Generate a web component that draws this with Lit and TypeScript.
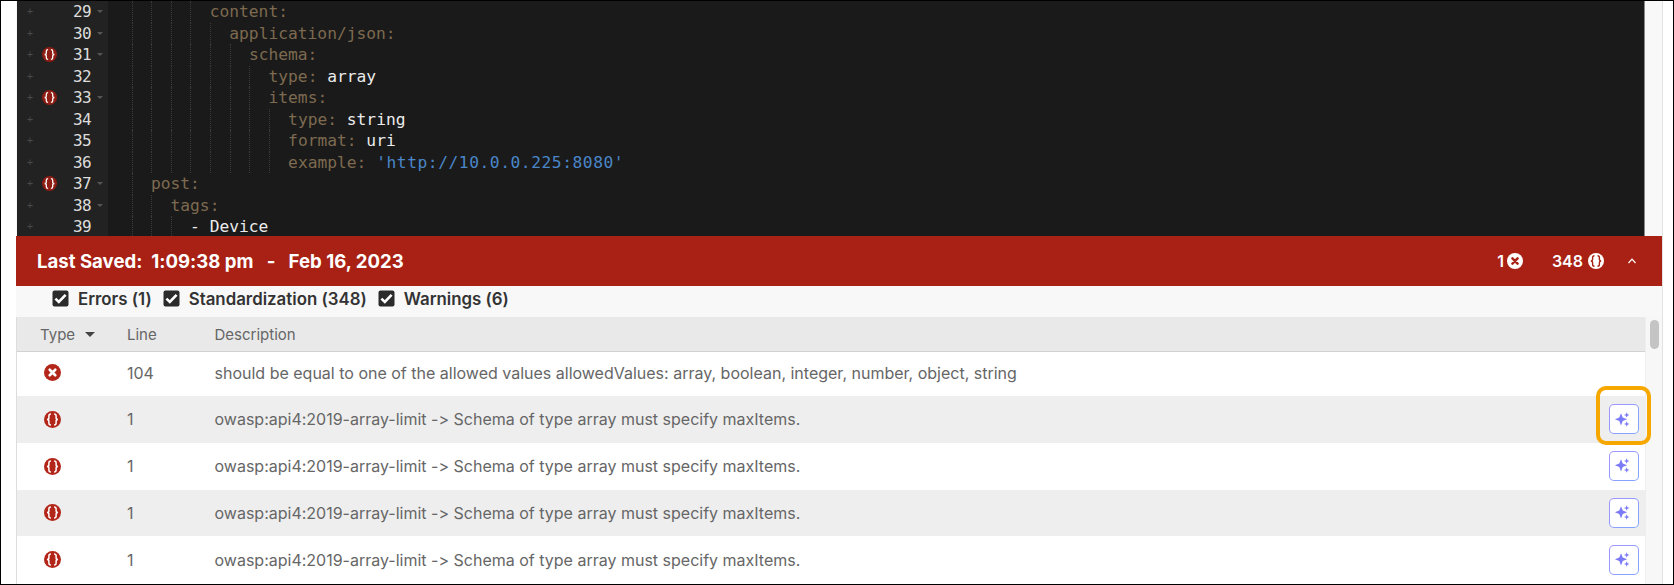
import { LitElement, html, css, svg } from "lit";
import { customElement } from "lit/decorators.js";

const CODE: [string, string, string, string, boolean, boolean][] = [
  ["29", "content:", "", "", false, true],
  ["30", "application/json:", "", "", false, true],
  ["31", "schema:", "", "", true, true],
  ["32", "type:", " array", "", false, false],
  ["33", "items:", "", "", true, true],
  ["34", "type:", " string", "", false, false],
  ["35", "format:", " uri", "", false, false],
  ["36", "example:", " ", "'http://10.0.0.225:8080'", false, false],
  ["37", "post:", "", "", true, true],
  ["38", "tags:", "", "", false, true],
  ["39", "", "- Device", "", false, false],
];
const INDENT = [5, 6, 7, 8, 8, 9, 9, 9, 2, 3, 4];
const GUIDES = [
  [1, 2, 3, 4], [1, 2, 3, 4, 5], [1, 2, 3, 4, 5, 6], [1, 2, 3, 4, 5, 6, 7], [1, 2, 3, 4, 5, 6, 7],
  [1, 2, 3, 4, 5, 6, 7, 8], [1, 2, 3, 4, 5, 6, 7, 8], [1, 2, 3, 4, 5, 6, 7, 8], [1], [1, 2], [1, 2, 3],
];

const errorIcon = (c: string, f: string, s: number) => html`<svg width=${s} height=${s} viewBox="0 0 16 16">
  <circle cx="8" cy="8" r="8" fill=${c}></circle>
  <path d="M5.4 5.4l5.2 5.2M10.6 5.4l-5.2 5.2" stroke=${f} stroke-width="2.5" stroke-linecap="round"></path>
</svg>`;
const braceIcon = (c: string, f: string, s: number) => html`<svg width=${s} height=${s} viewBox="0 0 16 16">
  <circle cx="8" cy="8" r="8" fill=${c}></circle>
  <path d="M6.5 2.8C5 2.8 4.6 3.5 4.6 4.6v2C4.6 7.5 4 8 2.8 8c1.2 0 1.8.5 1.8 1.4v2c0 1.1.4 1.8 1.9 1.8M9.5 2.8c1.5 0 1.9.7 1.9 1.8v2c0 .9.6 1.4 1.8 1.4-1.2 0-1.8.5-1.8 1.4v2c0 1.1-.4 1.8-1.9 1.8" fill="none" stroke=${f} stroke-width="1.4"></path>
</svg>`;
const sparkle = svg`<path d="M13 9.2l1.7 4.4 4.4 1.7-4.4 1.7-1.7 4.4-1.7-4.4-4.4-1.7 4.4-1.7z" fill="#7b7bf7"></path>
  <path d="M18.7 8.2l.8 2 2 .8-2 .8-.8 2-.8-2-2-.8 2-.8zM18.7 17.2l.8 2 2 .8-2 .8-.8 2-.8-2-2-.8 2-.8z" fill="#7b7bf7"></path>`;
const check = html`<svg width="17" height="17" viewBox="0 0 17 17">
  <rect x="0.5" y="0.5" width="16" height="16" rx="2" fill="#2b2b2b"></rect>
  <path d="M3.4 8.6l3.4 3.4 6.8-7.2" fill="none" stroke="#fff" stroke-width="2.6"></path>
</svg>`;

const ROWS: [string, string, string][] = [
  ["e", "104", "should be equal to one of the allowed values allowedValues: array, boolean, integer, number, object, string"],
  ["b", "1", "owasp:api4:2019-array-limit -> Schema of type array must specify maxItems."],
  ["b", "1", "owasp:api4:2019-array-limit -> Schema of type array must specify maxItems."],
  ["b", "1", "owasp:api4:2019-array-limit -> Schema of type array must specify maxItems."],
  ["b", "1", "owasp:api4:2019-array-limit -> Schema of type array must specify maxItems."],
];

@customElement("app-root")
export class AppRoot extends LitElement {
  static styles = css`
    :host { display: block; width: 1674px; height: 585px; overflow: hidden; box-sizing: border-box; background: #fff;
      border: 1px solid #000; font-family: Inter, "Liberation Sans", sans-serif; font-variant-ligatures: none; font-feature-settings: "calt" 0; }
    .frame { margin: 0 10px 0 15px; height: 583px; display: flex; flex-direction: column; overflow: hidden; border-right: 1px solid #e2e2e2; }
    .top { height: 235px; flex: none; display: flex; background: #f8f8f8; padding-left: 1px; }
    .editor { flex: 1; min-width: 0; display: flex; background: #1a1a1a; margin-right: 17px; border-right: 1px solid #8a8a8a; overflow: hidden;
      font-family: "DejaVu Sans Mono", monospace; font-size: 16.25px; line-height: 21.5px; }
    .gutter { width: 91px; flex: none; background: #222; color: #ddd; }
    .gline { height: 21.5px; display: flex; align-items: center; position: relative; }
    .plus { width: 25px; padding-left: 10px; box-sizing: border-box; color: #4a4a4a; font-size: 10px; flex: none; }
    .mark { width: 31px; flex: none; display: flex; }
    .num { width: 20px; flex: none; font-size: 16px; letter-spacing: -0.6px; }
    .fold { margin-left: 4px; width: 0; height: 0; border: 3px solid transparent; border-top: 3px solid #555; border-bottom: 0; }
    .code { flex: 1; }
    .cline { height: 21.5px; white-space: pre; position: relative; color: #e8e8e8; display: flex; }
    .guide { position: absolute; top: 0; bottom: 0; width: 0; border-left: 1px dotted #3c3c3c; }
    .key { color: #7d6a50; }
    .str { color: #4a86c8; letter-spacing: 0.55px; }
    .val { color: #ececec; }
    .status { height: 50px; flex: none; background: #a82114; color: #fff; display: flex; align-items: center; padding: 0 26px 0 21px;
      font-weight: 700; font-size: 18.6px; white-space: pre; }
    .spacer { flex: 1; }
    .cnt { display: flex; align-items: center; gap: 5px; font-size: 16px; font-weight: 600; white-space: normal; }
    .c1 { margin-right: 29px; gap: 3px; }
    .chev { margin-left: 24px; display: flex; }
    .filters { height: 30.5px; flex: none; background: #f8f8f8; display: flex; align-items: center; padding: 0 0 5px 36px; box-sizing: border-box; color: #333;
      font-weight: 600; font-size: 16.85px; }
    .filter { display: flex; align-items: center; gap: 9px; margin-right: 11px; }
    .tablewrap { flex: 1; display: flex; min-height: 0; border-left: 1px solid #ddd; }
    .table { flex: 1; min-width: 0; position: relative; z-index: 1; }
    .sb { width: 17px; flex: none; background: #f7f7f7; padding: 3.5px 4px 0 4px; box-sizing: border-box; border-left: 1px solid #eee; }
    .thumb { height: 29px; width: 9px; border-radius: 5px; background: #c4c4c4; }
    .row { display: grid; grid-template-columns: 110px 87.5px 1fr 64px; align-items: center; font-size: 16px; color: #666; }
    .head { height: 35.5px; padding-top: 1px; font-size: 15px; background: #e9e9e9; border-bottom: 1px solid #d2d2d2; box-sizing: border-box; }
    .type { padding-left: 23px; display: flex; align-items: center; gap: 10px; }
    .caret { width: 0; height: 0; border: 5px solid transparent; border-top: 5px solid #444; border-bottom: 0; }
    .item { height: 46.8px; }
    .item.first { height: 44px; padding-bottom: 3px; box-sizing: border-box; }
    .item:nth-child(odd) { background: #eee; }
    .icon { padding-left: 26.5px; display: flex; }
    .btnwrap { display: flex; justify-content: flex-end; padding-right: 6px; }
    .btn { position: relative; width: 30px; height: 30px; box-sizing: border-box; border: 1.8px solid transparent; border-radius: 5px; display: block;
      background: linear-gradient(#fff, #fff) padding-box, linear-gradient(135deg, #a295fb, #7ea6ff) border-box; }
    .btn svg { position: absolute; left: -1.8px; top: -1.8px; }
    .ring { position: absolute; left: -13.8px; top: -19.1px; width: 55px; height: 58.6px; box-sizing: border-box; border: 4px solid #f7a800; border-radius: 10px; pointer-events: none; }
  `;

  render() {
    return html`<div class="frame">
      <div class="top">
      <div class="editor">
        <div class="gutter">
          ${CODE.map((l) => html`<div class="gline">
            <span class="plus">+</span>
            <span class="mark">${l[4] ? braceIcon("#8e1e14", "#fff", 15) : ""}</span>
            <span class="num">${l[0]}</span>
            ${l[5] ? html`<span class="fold"></span>` : ""}
          </div>`)}
        </div>
        <div class="code">
          ${CODE.map((l, i) => html`<div class="cline">
            ${GUIDES[i].map((g) => html`<span class="guide" style="left:${g * 19.6 + 4}px"></span>`)}
            <span style="width:${INDENT[i] * 19.6 + 3.7}px;flex:none"></span><span class="key">${l[1]}</span><span class="val">${l[2]}</span><span class="str">${l[3]}</span>
          </div>`)}
        </div>
      </div>
      </div>
      <div class="status">
        <span>Last Saved:  1:09:38 pm   -   Feb 16, 2023</span>
        <span class="spacer"></span>
        <span class="cnt c1">1 ${errorIcon("#fff", "#a82114", 16)}</span>
        <span class="cnt">348 ${braceIcon("#fff", "#a82114", 16)}</span>
        <span class="chev"><svg width="8" height="6" viewBox="0 0 8 6"><path d="M0.5 5L4 1.2 7.5 5" fill="none" stroke="#fff" stroke-width="1.2"></path></svg></span>
      </div>
      <div class="filters">
        <span class="filter">${check}Errors (1)</span>
        <span class="filter">${check}Standardization (348)</span>
        <span class="filter">${check}Warnings (6)</span>
      </div>
      <div class="tablewrap">
        <div class="table">
          <div class="row head"><span class="type">Type <span class="caret"></span></span><span>Line</span><span>Description</span><span></span></div>
          ${ROWS.map((r, i) => html`<div class="row item ${i === 0 ? "first" : ""}">
            <span class="icon">${r[0] === "e" ? errorIcon("#b3261a", "#fff", 17) : braceIcon("#b3261a", "#fff", 17)}</span>
            <span>${r[1]}</span><span>${r[2]}</span>
            <span class="btnwrap">
              ${r[0] === "b" ? html`<span class="btn"><svg width="30" height="30" viewBox="0 0 30 30">${sparkle}</svg>${i === 1 ? html`<span class="ring"></span>` : ""}</span>` : ""}
            </span>
          </div>`)}
        </div>
        <div class="sb"><div class="thumb"></div></div>
      </div>
    </div>`;
  }
}
